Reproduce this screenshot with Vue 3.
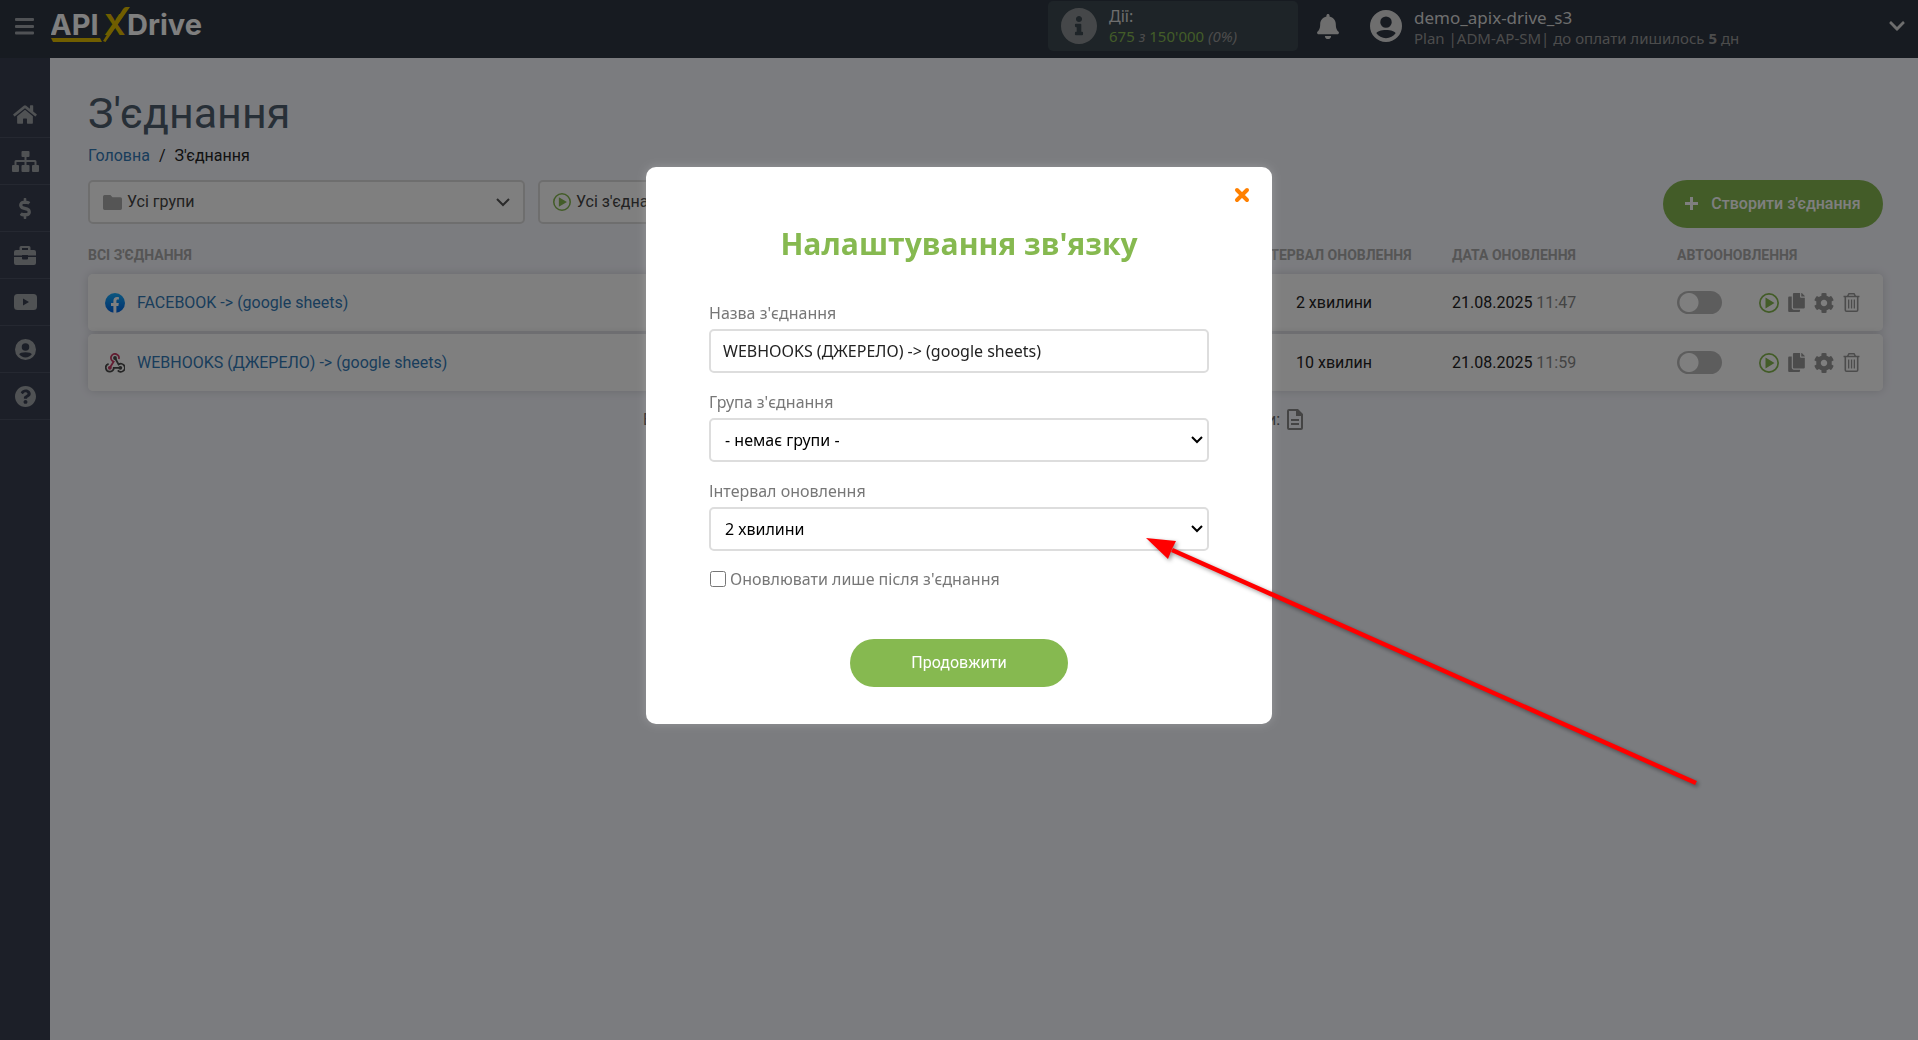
<template>
  <div class="app">
    <header class="header">
      <button class="icon-btn menu-toggle" type="button" aria-label="Меню">
        <svg viewBox="0 0 19 17"><path :d="icons.bars.d" /></svg>
      </button>
      <a class="logo" href="#" aria-label="APIXDrive">
        <svg viewBox="0 0 154 40">
          <path class="logo-mark" d="M0 32H49L51 36H2zM52 35L72 3Q73.500 1 75 1H79L54.500 36z" />
          <text x="-1" y="29">API</text>
          <text class="logo-x" x="53" y="29">X</text>
          <text x="76" y="29">Drive</text>
        </svg>
      </a>

      <div class="counter">
        <svg class="counter-icon" viewBox="8 8 496 496"><path :d="icons.info.d" /></svg>
        <div class="counter-text">
          <div class="counter-title">Дії:</div>
          <div class="counter-value">
            <b>675</b> <i>з</i> <b>150'000</b> <i>(0%)</i>
          </div>
        </div>
      </div>

      <button class="icon-btn bell" type="button" aria-label="Сповіщення">
        <svg viewBox="0 0 448 512"><path :d="icons.bell.d" /></svg>
      </button>

      <div class="user">
        <svg class="user-avatar" viewBox="0 0 24 24"><path :d="icons.user.d" /></svg>
        <div class="user-info">
          <div class="user-name">demo_apix-drive_s3</div>
          <div class="user-plan">
            Plan |ADM-AP-SM| до оплати лишилось <b>5</b> дн
          </div>
        </div>
        <button class="icon-btn user-more" type="button" aria-label="Профіль">
          <svg viewBox="0 0 448 512"><path :d="icons.chevron.d" /></svg>
        </button>
      </div>
    </header>

    <div class="body">
      <nav class="sidebar">
        <a
          v-for="item in menu"
          :key="item.icon"
          class="sidebar-item"
          href="#"
          :aria-label="item.label"
        >
          <svg :class="'i-' + item.icon" :viewBox="icons[item.icon].box">
            <path :d="icons[item.icon].d" />
          </svg>
        </a>
      </nav>

      <main class="content">
        <h1 class="page-title">З'єднання</h1>
        <div class="breadcrumbs">
          <a href="#">Головна</a><span class="slash">/</span><span>З'єднання</span>
        </div>

        <div class="toolbar">
          <div class="filter">
            <svg class="folder" viewBox="0 0 18 14"><path :d="icons.folder.d" /></svg>
            <select aria-label="Група">
              <option>Усі групи</option>
            </select>
            <svg class="arrow" viewBox="0 0 14 9"><path d="M1 1l6 6 6-6" /></svg>
          </div>
          <div class="filter">
            <svg class="play" viewBox="0 0 20 20"><path :d="icons.play.d" /></svg>
            <select aria-label="Статус">
              <option>Усі з'єднання</option>
            </select>
            <svg class="arrow" viewBox="0 0 14 9"><path d="M1 1l6 6 6-6" /></svg>
          </div>
          <button class="btn create" type="button">
            <svg viewBox="0 0 13 13"><path d="M5 0h3v5h5v3H8v5H5V8H0V5h5z" /></svg>
            Створити з'єднання
          </button>
        </div>

        <table class="table">
          <thead>
            <tr>
              <th>Всі з'єднання</th>
              <th class="col-interval">Інтервал оновлення</th>
              <th class="col-date">Дата оновлення</th>
              <th class="col-auto">Автооновлення</th>
              <th class="col-actions"></th>
            </tr>
          </thead>
          <tbody>
            <tr v-for="row in rows" :key="row.name">
              <td>
                <div class="name">
                  <svg v-if="row.source === 'facebook'" viewBox="0 0 20 20">
                    <defs>
                      <linearGradient id="fb" x1="0" y1="0" x2="0" y2="1">
                        <stop offset="0" stop-color="#19afff" />
                        <stop offset="1" stop-color="#0062e0" />
                      </linearGradient>
                    </defs>
                    <circle cx="10" cy="10" r="10" fill="url(#fb)" />
                    <path
                      fill="#fff"
                      d="M8.400 20v-7H6v-3h2.400V7.900C8.400 5.400 9.800 4 12 4c1 0 1.900.2 1.900.2v2.400h-1.100c-1.100 0-1.400.7-1.400 1.400v2h2.400l-.4 3h-2v7z"
                    />
                  </svg>
                  <svg v-else class="webhooks" viewBox="0 0 20 20">
                    <path stroke="#c73a63" d="M5 14.500L8.600 8.600A4 4 0 1 1 13.800 6" />
                    <path stroke="#4b4b4b" d="M10 5l3.600 6.400a4 4 0 1 1-.8 6" />
                    <path stroke="#4b4b4b" d="M15.500 14.800H8.800a4 4 0 1 1-5.200-4" />
                    <circle cx="10" cy="5" r="1.900" fill="#4b4b4b" />
                    <circle cx="4.800" cy="14.800" r="1.900" fill="#c73a63" />
                    <circle cx="15.300" cy="14.800" r="1.900" fill="#4b4b4b" />
                  </svg>
                  <a href="#">{{ row.name }}</a>
                </div>
              </td>
              <td class="col-interval">{{ row.interval }}</td>
              <td class="col-date">
                {{ row.date }} <span class="time">{{ row.time }}</span>
              </td>
              <td class="col-auto">
                <input
                  v-model="row.auto"
                  class="toggle"
                  type="checkbox"
                  aria-label="Автооновлення"
                />
              </td>
              <td class="col-actions">
                <div class="actions">
                  <button
                    v-for="action in actions"
                    :key="action.icon"
                    class="icon-btn"
                    type="button"
                    :aria-label="action.label"
                  >
                    <svg :class="'i-' + action.icon" :viewBox="icons[action.icon].box">
                      <path :d="icons[action.icon].d" />
                    </svg>
                  </button>
                </div>
              </td>
            </tr>
          </tbody>
        </table>

        <div class="summary">
          <span>Всього:</span>
          <span class="logs">
            Логи:
            <svg viewBox="0 0 16 21"><path :d="icons.file.d" /></svg>
          </span>
        </div>
      </main>
    </div>

    <div v-if="modalOpen" class="overlay">
      <form class="modal" role="dialog" aria-labelledby="modal-title" @submit.prevent="closeModal">
        <button class="icon-btn close" type="button" aria-label="Закрити" @click="closeModal">
          <svg viewBox="0 0 16 16"><path d="M3 3l10 10M13 3L3 13" /></svg>
        </button>
        <h2 id="modal-title" class="modal-title">Налаштування зв'язку</h2>

        <div class="field">
          <label for="name">Назва з'єднання</label>
          <input id="name" v-model="form.name" type="text" />
        </div>
        <div class="field">
          <label for="group">Група з'єднання</label>
          <div class="select">
            <select id="group" v-model="form.group">
              <option value="">- немає групи -</option>
            </select>
            <svg viewBox="0 0 12 8"><path d="M1 1l5 5 5-5" /></svg>
          </div>
        </div>
        <div class="field">
          <label for="interval">Інтервал оновлення</label>
          <div class="select">
            <select id="interval" v-model="form.interval">
              <option v-for="value in intervals" :key="value">{{ value }}</option>
            </select>
            <svg viewBox="0 0 12 8"><path d="M1 1l5 5 5-5" /></svg>
          </div>
        </div>
        <label class="check">
          <input v-model="form.afterOnly" type="checkbox" />
          Оновлювати лише після з'єднання
        </label>

        <button class="btn submit" type="submit">Продовжити</button>
      </form>

      <svg class="pointer" viewBox="0 0 560 256">
        <path class="pointer-line" d="M28 13L552 246" />
        <path class="pointer-head" d="M2 1L32 4 28 12 24 22z" />
      </svg>
    </div>
  </div>
</template>

<script setup>
import { reactive, ref } from "vue";

const icons = {
  bars: {
    d: "M1 0h17q1 0 1 1v1q0 1-1 1H1q-1 0-1-1V1q0-1 1-1zM1 7h17q1 0 1 1v1q0 1-1 1H1q-1 0-1-1V8q0-1 1-1zM1 13.500h17q1 0 1 1v1q0 1-1 1H1q-1 0-1-1v-1q0-1 1-1z",
  },
  home: {
    box: "0 0 576 512",
    d: "M280.370 148.260L96 300.110V464a16 16 0 0 0 16 16l112.060-.29a16 16 0 0 0 15.920-16V368a16 16 0 0 1 16-16h64a16 16 0 0 1 16 16v95.640a16 16 0 0 0 16 16.050L464 480a16 16 0 0 0 16-16V300L295.670 148.260a12.190 12.190 0 0 0-15.300 0zM571.600 251.470L488 182.560V44.050a12 12 0 0 0-12-12h-56a12 12 0 0 0-12 12v72.610L318.470 43a48 48 0 0 0-61 0L4.340 251.470a12 12 0 0 0-1.600 16.900l25.500 31A12 12 0 0 0 45.150 301l235.220-193.740a12.190 12.190 0 0 1 15.300 0L530.900 301a12 12 0 0 0 16.900-1.600l25.500-31a12 12 0 0 0-1.700-16.930z",
  },
  sitemap: {
    box: "0 0 27 21",
    d: "M10.500 0h6q1 0 1 1v4q0 1-1 1h-2v3h8.500q1.500 0 1.500 1.500V14h1.500q1 0 1 1v5q0 1-1 1h-5q-1 0-1-1v-5q0-1 1-1h1.500v-3h-8v3h2q1 0 1 1v5q0 1-1 1h-6q-1 0-1-1v-5q0-1 1-1h2v-3h-8v3H6q1 0 1 1v5q0 1-1 1H1q-1 0-1-1v-5q0-1 1-1h1.500v-3.500Q2.500 9 4 9h8.500V6h-2q-1 0-1-1V1q0-1 1-1z",
  },
  dollar: {
    box: "0 0 288 512",
    d: "M209.200 233.400l-108-31.600C88.700 198.200 80 186.500 80 173.500c0-16.300 13.200-29.500 29.500-29.500h66.300c12.200 0 24.200 3.700 34.200 10.500 6.100 4.100 14.300 3.100 19.500-2l34.800-34c7.100-6.900 6.100-18.400-1.800-24.500C238 74.800 207.400 64.100 176 64V16c0-8.800-7.200-16-16-16h-32c-8.800 0-16 7.200-16 16v48h-2.500C45.800 64-5.400 118.700.5 183.600c4.200 46.100 39.400 83.600 83.800 96.600l102.500 30c12.500 3.700 21.200 15.300 21.200 28.300 0 16.300-13.200 29.500-29.500 29.500h-66.300C100 368 88 364.300 78 357.500c-6.100-4.100-14.300-3.100-19.500 2l-34.800 34c-7.100 6.900-6.100 18.400 1.800 24.500 24.500 19.200 55.100 29.900 86.500 30v48c0 8.800 7.200 16 16 16h32c8.800 0 16-7.200 16-16v-48.200c46.600-.9 90.300-28.600 105.700-72.700 21.500-61.600-14.600-124.800-72.500-141.700z",
  },
  case: {
    box: "0 0 22 19",
    d: "M7 0h8q1.500 0 1.500 1.500V4H20q2 0 2 2v3.500H14V9H8v.5H0V6q0-2 2-2h3.500V1.500Q5.500 0 7 0zM8 2v2h6V2zM0 11h8v1.500Q8 13.500 9 13.500h4q1 0 1-1V11h8v6q0 2-2 2H2q-2 0-2-2z",
  },
  youtube: {
    box: "0 0 23 16",
    d: "M3.500 0h16Q23 0 23 3.500v9q0 3.500-3.500 3.500h-16Q0 16 0 12.500v-9Q0 0 3.500 0zM9 4.600v6.800l6-3.400z",
  },
  user: {
    box: "0 0 24 24",
    d: "M12 0a12 12 0 1 0 0 24 12 12 0 0 0 0-24zM12 4.800a4.300 4.300 0 1 1 0 8.600 4.300 4.300 0 0 1 0-8.600zM12 15c3.800 0 6.800 1 7.200 2.500-1.600 2.300-4.200 3.700-7.200 3.700s-5.600-1.400-7.200-3.700C5.200 16 8.200 15 12 15z",
  },
  help: {
    box: "8 8 496 496",
    d: "M504 256c0 136.997-111.043 248-248 248S8 392.997 8 256C8 119.083 119.043 8 256 8s248 111.083 248 248zM262.655 90c-54.497 0-89.255 22.957-116.549 63.758-3.536 5.286-2.353 12.415 2.715 16.258l34.699 26.310c5.205 3.947 12.621 3.008 16.665-2.122 17.864-22.658 30.113-35.797 57.303-35.797 20.429 0 45.698 13.148 45.698 32.958 0 14.976-12.363 22.667-32.534 33.976C247.128 238.528 216 254.941 216 296v4c0 6.627 5.373 12 12 12h56c6.627 0 12-5.373 12-12v-1.333c0-28.462 83.186-29.647 83.186-106.667 0-58.002-60.165-102-116.531-102zM256 338c-25.365 0-46 20.635-46 46 0 25.364 20.635 46 46 46s46-20.636 46-46c0-25.365-20.635-46-46-46z",
  },
  info: {
    d: "M256 8C119.043 8 8 119.083 8 256c0 136.997 111.043 248 248 248s248-111.003 248-248C504 119.083 392.957 8 256 8zm0 110c23.196 0 42 18.804 42 42s-18.804 42-42 42-42-18.804-42-42 18.804-42 42-42zm56 254c0 6.627-5.373 12-12 12h-88c-6.627 0-12-5.373-12-12v-24c0-6.627 5.373-12 12-12h12v-64h-12c-6.627 0-12-5.373-12-12v-24c0-6.627 5.373-12 12-12h64c6.627 0 12 5.373 12 12v100h12c6.627 0 12 5.373 12 12v24z",
  },
  bell: {
    d: "M224 512c35.320 0 63.970-28.650 63.970-64H160.030c0 35.350 28.650 64 63.970 64zm215.390-149.710c-19.320-20.760-55.470-51.990-55.470-154.290 0-77.700-54.480-139.900-127.940-155.160V32c0-17.670-14.320-32-31.980-32s-31.980 14.330-31.980 32v20.840C118.560 68.100 64.080 130.300 64.080 208c0 102.300-36.150 133.530-55.470 154.290-6 6.450-8.660 14.160-8.610 21.710.11 16.400 12.980 32 32.100 32h383.800c19.120 0 32-15.600 32.100-32 .05-7.550-2.610-15.270-8.610-21.710z",
  },
  chevron: {
    d: "M207.029 381.476L12.686 187.132c-9.373-9.373-9.373-24.569 0-33.941l22.667-22.667c9.357-9.357 24.522-9.375 33.901-.04L224 284.505l154.745-154.021c9.379-9.335 24.544-9.317 33.901.04l22.667 22.667c9.373 9.373 9.373 24.569 0 33.941L240.971 381.476c-9.373 9.372-24.569 9.372-33.942 0z",
  },
  folder: {
    d: "M1.500 0H7l2 2h7.500Q18 2 18 3.500v9q0 1.500-1.500 1.500h-15Q0 14 0 12.500v-11Q0 0 1.500 0z",
  },
  play: {
    box: "0 0 20 20",
    d: "M10 0a10 10 0 1 0 0 20 10 10 0 0 0 0-20zM10 1.700a8.300 8.300 0 1 1 0 16.600 8.300 8.300 0 0 1 0-16.600zM6.500 4.600v10.800L15.500 10z",
  },
  copy: {
    box: "0 0 448 512",
    d: "M320 448v40c0 13.255-10.745 24-24 24H24c-13.255 0-24-10.745-24-24V120c0-13.255 10.745-24 24-24h72v296c0 30.879 25.121 56 56 56h168zm0-344V0H152c-13.255 0-24 10.745-24 24v368c0 13.255 10.745 24 24 24h272c13.255 0 24-10.745 24-24V128H344c-13.200 0-24-10.800-24-24zm120.971-31.029L375.029 7.029A24 24 0 0 0 358.059 0H352v96h96v-6.059a24 24 0 0 0-7-16.970z",
  },
  cog: {
    box: "8 8 496 496",
    d: "M487.400 315.700l-42.600-24.600c4.300-23.200 4.300-47 0-70.200l42.600-24.600c4.900-2.800 7.100-8.600 5.500-14-11.100-35.600-30-67.800-54.700-94.600-3.800-4.100-10-5.100-14.800-2.300L380.800 110c-17.900-15.400-38.500-27.300-60.800-35.100V25.800c0-5.600-3.900-10.500-9.400-11.700-36.700-8.200-74.300-7.800-109.200 0-5.500 1.200-9.400 6.100-9.400 11.700V75c-22.200 7.900-42.800 19.800-60.800 35.100L88.700 85.500c-4.900-2.800-11-1.900-14.800 2.300-24.700 26.700-43.600 58.900-54.700 94.600-1.700 5.400.6 11.200 5.500 14L67.300 221c-4.300 23.200-4.300 47 0 70.200l-42.600 24.600c-4.900 2.800-7.100 8.600-5.500 14 11.100 35.600 30 67.800 54.700 94.600 3.800 4.100 10 5.100 14.800 2.300l42.600-24.600c17.900 15.400 38.500 27.300 60.800 35.100v49.200c0 5.600 3.900 10.500 9.400 11.700 36.700 8.200 74.300 7.800 109.200 0 5.500-1.200 9.400-6.100 9.400-11.700v-49.200c22.200-7.900 42.800-19.800 60.800-35.100l42.600 24.600c4.900 2.800 11 1.900 14.800-2.300 24.700-26.700 43.600-58.900 54.700-94.600 1.500-5.500-.7-11.300-5.600-14.100zM256 336c-44.100 0-80-35.900-80-80s35.900-80 80-80 80 35.900 80 80-35.900 80-80 80z",
  },
  trash: {
    box: "0 0 16 19",
    d: "M5 0h6l1.500 2.700H16v1.600h-1V17q0 2-2 2H3q-2 0-2-2V4.300H0V2.700h3.500zM5.800 1.500l-.6 1.200h5.600l-.6-1.200zM2.600 4.300V17q0 .5.500.5h9.800q.5 0 .5-.5V4.300zM4.500 6.500h1.300v9H4.500zM7.400 6.500h1.300v9H7.400zM10.200 6.500h1.300v9h-1.300z",
  },
  file: {
    d: "M2 0h9l5 5v14q0 2-2 2H2q-2 0-2-2V2Q0 0 2 0zM2 2v17h12V7H9V2zM4 10h8v2H4zM4 14h8v2H4z",
  },
};

const menu = [
  { icon: "home", label: "Головна" },
  { icon: "sitemap", label: "З'єднання" },
  { icon: "dollar", label: "Оплата" },
  { icon: "case", label: "Кабінет" },
  { icon: "youtube", label: "Відео" },
  { icon: "user", label: "Профіль" },
  { icon: "help", label: "Допомога" },
];

const actions = [
  { icon: "play", label: "Запустити" },
  { icon: "copy", label: "Копіювати" },
  { icon: "cog", label: "Налаштування" },
  { icon: "trash", label: "Видалити" },
];

const rows = ref([
  {
    source: "facebook",
    name: "FACEBOOK -> (google sheets)",
    interval: "2 хвилини",
    date: "21.08.2025",
    time: "11:47",
    auto: false,
  },
  {
    source: "webhooks",
    name: "WEBHOOKS (ДЖЕРЕЛО) -> (google sheets)",
    interval: "10 хвилин",
    date: "21.08.2025",
    time: "11:59",
    auto: false,
  },
]);

const intervals = ["2 хвилини", "10 хвилин"];

const form = reactive({
  name: "WEBHOOKS (ДЖЕРЕЛО) -> (google sheets)",
  group: "",
  interval: "2 хвилини",
  afterOnly: false,
});

const modalOpen = ref(true);

const closeModal = () => {
  modalOpen.value = false;
};
</script>

<style>
body {
  background: #f7f8ff;
}
</style>

<style scoped>
* {
  box-sizing: border-box;
}

.app {
  display: flex;
  flex-direction: column;
  min-height: 100vh;
  font-family: Roboto, "Liberation Sans", sans-serif;
  font-size: 16px;
  line-height: 20px;
  color: #222;
}

svg {
  display: block;
  flex: none;
  fill: currentColor;
  fill-rule: evenodd;
}

a {
  color: #337ab7;
  text-decoration: none;
}

.icon-btn {
  display: flex;
  padding: 0;
  border: none;
  background: none;
  color: inherit;
  cursor: pointer;
}

/* Header */
.header {
  display: flex;
  align-items: center;
  height: 58px;
  padding: 0 13px 6px 15px;
  background: #2e3642;
  color: #ddd;
  font-family: "Noto Sans", "Open Sans", sans-serif;
}

.menu-toggle {
  color: #a0a4aa;
}

.menu-toggle svg {
  width: 19px;
  height: 17px;
}

.logo {
  margin-left: 17px;
  color: #fff;
}

.logo svg {
  width: 154px;
  height: 40px;
  font: 700 29px Inter, sans-serif;
}

.logo-mark,
.logo-x {
  fill: #e0bc00;
}

.counter {
  display: flex;
  align-items: center;
  gap: 12px;
  width: 250px;
  height: 50px;
  margin-left: auto;
  padding-left: 13px;
  border-radius: 5px;
  background: #3c4850;
}

.counter-icon {
  width: 36px;
  height: 36px;
  color: #8b8f92;
}

.counter-value {
  font-size: 15px;
  color: #999;
}

.counter-value b {
  font-weight: 400;
  color: #86b950;
}

.bell {
  margin: 0 31px 0 19px;
}

.bell svg {
  width: 22px;
  height: 25px;
}

.user {
  display: flex;
  align-items: center;
  width: 535px;
}

.user-avatar {
  width: 32px;
  height: 32px;
}

.user-info {
  flex: 1;
  padding: 4px 0 0 12px;
}

.user-name {
  font-size: 17px;
}

.user-plan {
  font-size: 15px;
  color: #999;
}

.user-more svg {
  width: 16px;
  height: 18px;
}

/* Sidebar */
.body {
  display: flex;
  flex: 1;
}

.sidebar {
  flex: none;
  width: 50px;
  padding-top: 33px;
  background: #383e50;
}

.sidebar-item {
  display: flex;
  align-items: center;
  justify-content: center;
  height: 47px;
  border-bottom: 1px solid #4b5162;
  color: #a0a4a8;
}

.i-home {
  width: 24px;
  height: 21px;
}

.i-sitemap {
  width: 27px;
  height: 21px;
}

.i-dollar {
  width: 12px;
  height: 21px;
}

.i-case {
  width: 22px;
  height: 19px;
}

.i-youtube {
  width: 23px;
  height: 16px;
}

.i-user,
.i-help {
  width: 21px;
  height: 21px;
}

/* Content */
.content {
  flex: 1;
  padding: 30px 35px 30px 38px;
}

.page-title {
  margin: 0;
  font-size: 43px;
  font-weight: 400;
  line-height: 50px;
  color: #4f5f6f;
}

.breadcrumbs {
  margin-top: 8px;
}

.slash {
  margin: 0 9px;
}

.toolbar {
  display: flex;
  gap: 13px;
  margin-top: 14px;
}

.filter {
  display: flex;
  align-items: center;
  gap: 5px;
  width: 437px;
  height: 44px;
  padding: 0 13px;
  border: 2px solid #ddd;
  border-radius: 5px;
  background: #fff;
}

.filter select {
  flex: 1;
  padding: 0;
  border: none;
  appearance: none;
  background: none;
  color: #444;
  font: inherit;
}

.folder {
  width: 19px;
  height: 15px;
  color: #aaa;
}

.play {
  width: 18px;
  height: 18px;
  color: #86b950;
}

.arrow {
  width: 14px;
  height: 9px;
  fill: none;
  stroke: #555;
  stroke-width: 2;
}

.btn {
  display: flex;
  align-items: center;
  justify-content: center;
  height: 48px;
  padding: 0 0 2px;
  border: none;
  border-radius: 24px;
  background: #86b950;
  color: #fff;
  font: 400 16px Roboto, sans-serif;
  cursor: pointer;
}

.create {
  gap: 13px;
  width: 220px;
  margin-left: auto;
  font-weight: 500;
}

.create svg {
  width: 13px;
  height: 13px;
}

.table {
  width: 100%;
  margin-top: 14px;
  border-spacing: 0 3px;
  table-layout: fixed;
}

.table th {
  height: 26px;
  padding: 0;
  color: #aaa;
  font-size: 14px;
  font-weight: 700;
  text-align: left;
  text-transform: uppercase;
  vertical-align: top;
  white-space: nowrap;
}

.table tbody tr {
  border-radius: 5px;
  box-shadow: 0 0 10px rgba(0, 0, 0, 0.15);
}

.table td {
  height: 57px;
  padding: 0;
  background: #fff;
}

.table td:first-child {
  padding-left: 17px;
  border-radius: 5px 0 0 5px;
}

.table td:last-child {
  border-radius: 0 5px 5px 0;
}

.name {
  display: flex;
  align-items: center;
  gap: 12px;
}

.name svg {
  width: 20px;
  height: 20px;
}

.webhooks {
  fill: none;
  stroke-width: 1.8;
}

.table .col-interval {
  width: 236px;
  text-align: center;
}

.table .col-date {
  width: 225px;
}

.table .col-auto {
  width: 82px;
}

.table .col-actions {
  width: 124px;
}

.time {
  color: #888;
}

.toggle {
  display: block;
  width: 45px;
  height: 23px;
  margin: 0;
  border-radius: 12px;
  appearance: none;
  background: radial-gradient(circle at 12px 50%, #fff 9px, #bbb 10px);
  cursor: pointer;
}

.toggle:checked {
  background: radial-gradient(circle at 33px 50%, #fff 9px, #86b950 10px);
}

.actions {
  display: flex;
  align-items: center;
  gap: 9px;
  color: #999;
}

.i-play {
  width: 20px;
  height: 20px;
  color: #86b950;
}

.i-copy {
  width: 17px;
  height: 19px;
}

.i-cog {
  width: 20px;
  height: 20px;
}

.i-trash {
  width: 17px;
  height: 19px;
}

.summary {
  display: flex;
  align-items: center;
  justify-content: space-between;
  width: 685px;
  margin: 15px auto 0;
  padding-right: 25px;
  color: #555;
}

.logs {
  display: flex;
  align-items: center;
  gap: 7px;
}

.logs svg {
  width: 16px;
  height: 21px;
  color: #888;
}

/* Modal */
.overlay {
  position: fixed;
  inset: 0;
  padding-top: 167px;
  background: rgba(0, 0, 0, 0.5);
  font-family: "Noto Sans", "Open Sans", sans-serif;
}

.modal {
  position: relative;
  width: 626px;
  margin: 0 auto;
  padding: 59px 63px 37px;
  border-radius: 10px;
  background: #fff;
  box-shadow: 0 0 10px rgba(255, 255, 255, 0.2);
}

.close {
  position: absolute;
  top: 20px;
  right: 22px;
  color: #ff8000;
}

.close svg {
  width: 16px;
  height: 16px;
  stroke: currentColor;
  stroke-width: 4;
  stroke-linecap: round;
}

.modal-title {
  margin: 0 0 39px;
  font-family: "Open Sans", "Noto Sans", sans-serif;
  font-size: 30px;
  font-weight: 700;
  line-height: 36px;
  text-align: center;
  color: #86b950;
}

.field {
  margin-bottom: 17px;
}

.field label {
  display: block;
  margin-bottom: 4px;
  line-height: 24px;
  color: #777;
}

.field input,
.field select {
  display: block;
  width: 100%;
  height: 44px;
  padding: 0 12px;
  border: 2px solid #ddd;
  border-radius: 5px;
  background: #fff;
  color: #222;
  font: inherit;
}

.field select {
  padding: 0 14px;
  appearance: none;
  color: #000;
}

.select {
  position: relative;
}

.select svg {
  position: absolute;
  top: 18px;
  right: 6px;
  width: 12px;
  height: 8px;
  fill: none;
  stroke: #000;
  stroke-width: 2;
  pointer-events: none;
}

.check {
  display: flex;
  align-items: center;
  gap: 4px;
  height: 21px;
  color: #777;
}

.check input {
  width: 16px;
  height: 16px;
  margin: 0 0 0 1px;
}

.submit {
  width: 218px;
  margin: 50px auto 0;
}

/* Hint arrow that points at the interval select */
.pointer {
  position: absolute;
  left: 1144px;
  top: 537px;
  width: 560px;
  height: 256px;
  pointer-events: none;
  filter: drop-shadow(2px 2px 2px rgba(0, 0, 0, 0.4));
}

.pointer-line {
  stroke: #f00;
  stroke-width: 4.5;
}

.pointer-head {
  fill: #f00;
}
</style>
